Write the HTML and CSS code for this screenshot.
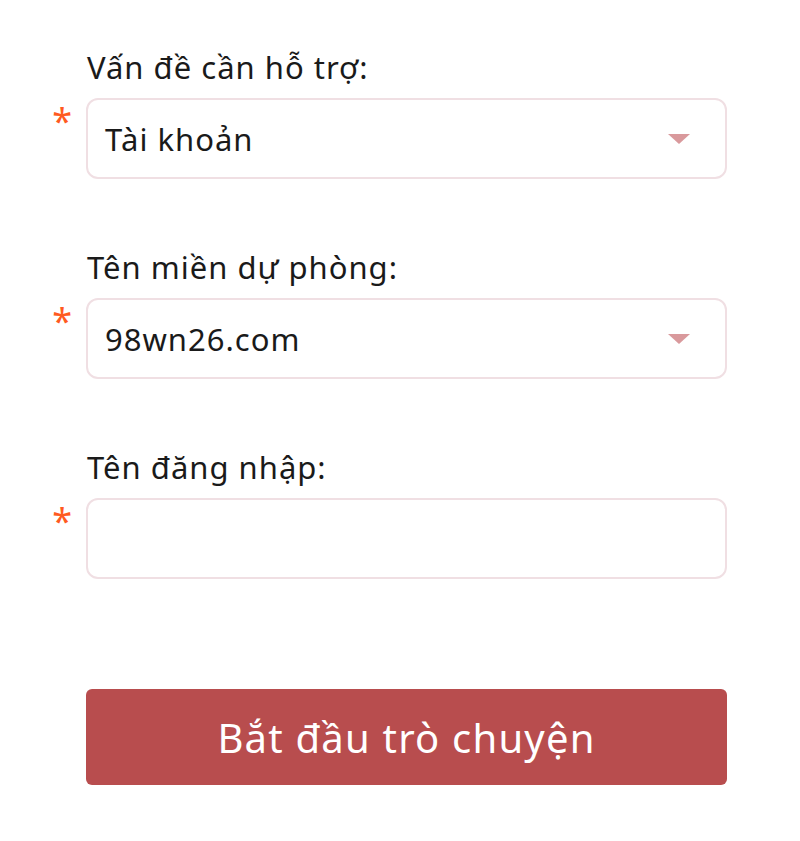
FILE: index.html
```html
<!DOCTYPE html>
<html lang="vi">
<head>
  <meta charset="UTF-8">
  <meta name="viewport" content="width=device-width, initial-scale=1.0">
  <title>Hỗ trợ</title>
  <link rel="stylesheet" href="styles.css">
</head>
<body>
  <form class="support-form">
    <div class="field">
      <label class="field-label">Vấn đề cần hỗ trợ:</label>
      <div class="field-row">
        <span class="required">*</span>
        <div class="select-box">
          <span class="select-value">Tài khoản</span>
          <span class="caret"></span>
        </div>
      </div>
    </div>

    <div class="field">
      <label class="field-label">Tên miền dự phòng:</label>
      <div class="field-row">
        <span class="required">*</span>
        <div class="select-box">
          <span class="select-value">98wn26.com</span>
          <span class="caret"></span>
        </div>
      </div>
    </div>

    <div class="field">
      <label class="field-label">Tên đăng nhập:</label>
      <div class="field-row">
        <span class="required">*</span>
        <input class="text-input" type="text">
      </div>
    </div>

    <div class="actions">
      <button type="button" class="start-btn">Bắt đầu trò chuyện</button>
    </div>
  </form>
</body>
</html>
```

FILE: styles.css
```css
* {
  box-sizing: border-box;
}
body {
  margin: 0;
  background: #fff;
  font-family: 'Noto Sans', sans-serif;
  color: #1a1a1a;
}
.support-form {
  padding-top: 44px;
}
.field {
  margin-bottom: 65px;
}
.field-label {
  display: block;
  padding-left: 87px;
  font-size: 31px;
  letter-spacing: 1px;
  line-height: 46px;
  margin-bottom: 8px;
}
.field-row {
  display: grid;
  grid-template-columns: 86px 641px;
}
.required {
  justify-self: end;
  padding-right: 14px;
  padding-top: 6px;
  color: #ff5a1f;
  font-size: 36px;
  line-height: 34px;
}
.select-box,
.text-input {
  height: 81px;
  border: 2px solid #f0dfe3;
  border-radius: 12px;
  background: #fff;
}
.select-box {
  display: flex;
  align-items: center;
  justify-content: space-between;
  padding: 0 35px 0 17px;
}
.select-value {
  font-size: 31px;
  letter-spacing: 1px;
}
.caret {
  width: 0;
  height: 0;
  border-left: 11px solid transparent;
  border-right: 11px solid transparent;
  border-top: 10px solid #d9999c;
}
.text-input {
  width: 100%;
  font: inherit;
  font-size: 31px;
  padding: 0 17px;
  outline: none;
}
.actions {
  padding: 45px 0 0 86px;
}
.start-btn {
  width: 641px;
  height: 96px;
  border: none;
  border-radius: 6px;
  background: #b84d4e;
  color: #fff;
  font-family: inherit;
  font-size: 40px;
  letter-spacing: 1.2px;
  cursor: pointer;
}
```
